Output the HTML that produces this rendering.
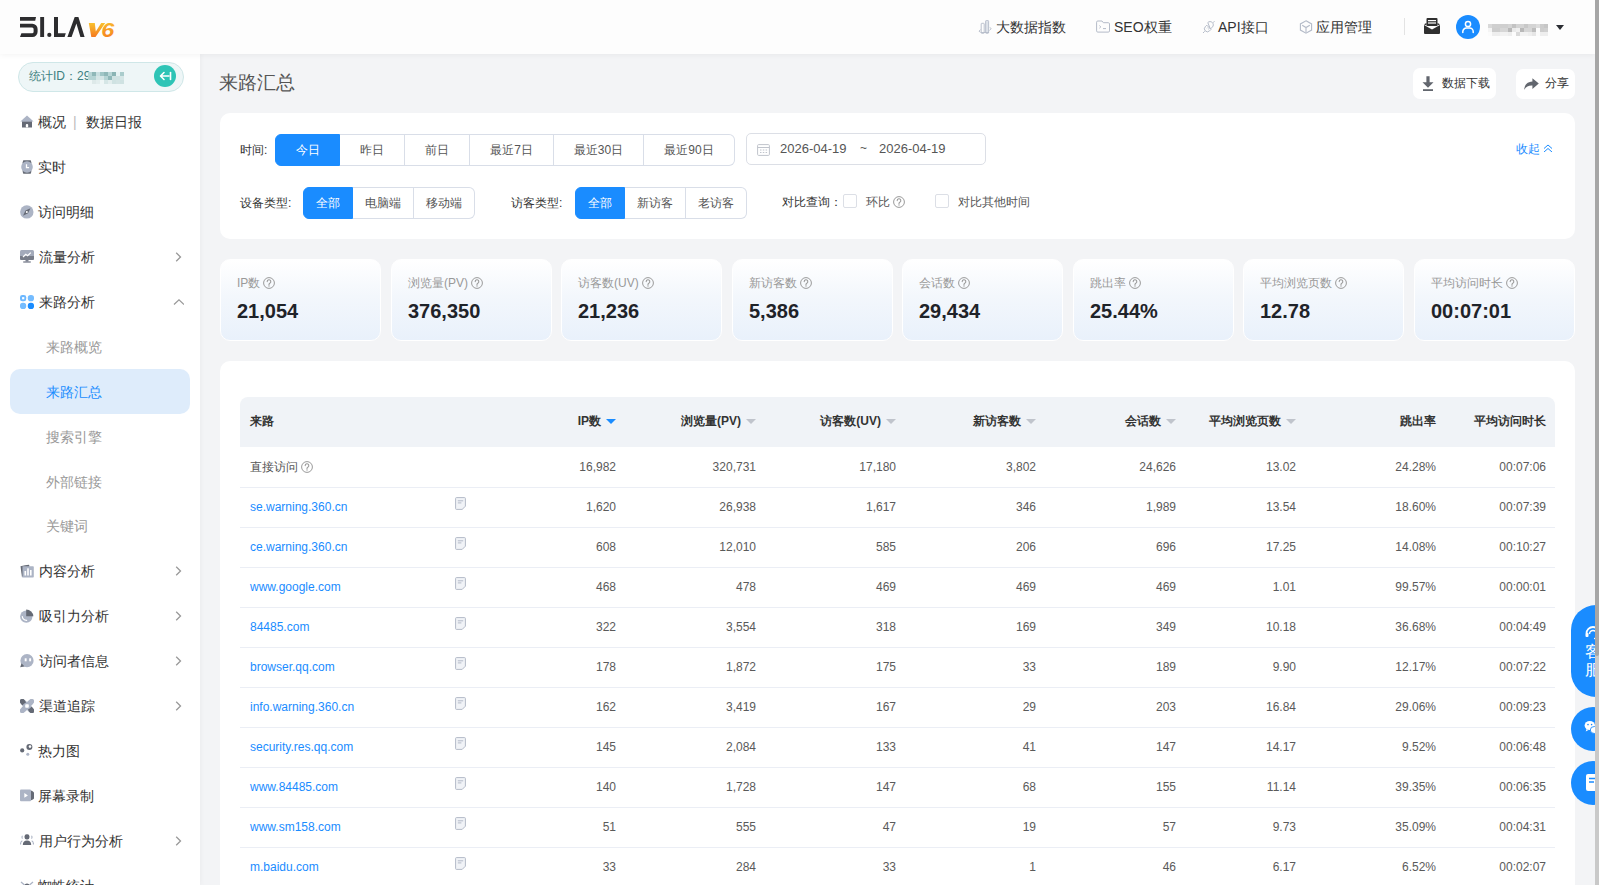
<!DOCTYPE html>
<html><head><meta charset="utf-8">
<style>
*{box-sizing:border-box;margin:0;padding:0}
html,body{width:1599px;height:885px;overflow:hidden}
body{font-family:"Liberation Sans",sans-serif;background:#f3f4f6;position:relative;color:#333}
.abs{position:absolute}
#hdr{left:0;top:0;width:1595px;height:54px;background:#fdfdfd;box-shadow:0 1px 6px rgba(0,0,0,0.05);z-index:3}
#side{left:0;top:54px;width:200px;height:831px;background:#fff;z-index:2;box-shadow:1px 0 5px rgba(0,0,0,0.04)}
#scroll{left:1595px;top:0;width:4px;height:885px;background:#c9c9c9;z-index:10}
#thumb{left:1595px;top:0;width:4px;height:656px;background:#a6a6a6;z-index:11;border-radius:0 0 2px 2px}
.nav{font-size:14px;color:#333;top:19px;line-height:16px;white-space:nowrap}
.mi{left:0;width:200px;height:45px;font-size:14px;color:#333;white-space:nowrap}
.mi .t{position:absolute;left:38px;top:15px;line-height:16px}
.mi .ic{position:absolute;left:20px;top:16px;width:14px;height:14px}
.mi .chev{position:absolute;left:174px;top:18px;width:8px;height:8px}
.sub{left:0;width:200px;height:45px;font-size:14px;color:#999;white-space:nowrap}
.sub .t{position:absolute;left:46px;top:15px;line-height:16px}
.card{background:#fff;border-radius:10px}
.btn{font-size:12px;color:#555;white-space:nowrap}
.grp{display:flex;height:32px}
.grp div{height:32px;line-height:30px;text-align:center;font-size:12px;color:#555;border:1px solid #d9dee8;border-left:none;background:#fff}
.grp div:first-child{border-left:1px solid #d9dee8;border-radius:6px 0 0 6px}
.grp div:last-child{border-radius:0 6px 6px 0}
.grp div.on{background:#1a8cff;color:#fff;border-color:#1a8cff}
.lbl{font-size:12px;color:#333;white-space:nowrap;line-height:14px}
.stat{top:259px;width:161px;height:82px;border-radius:10px;background:linear-gradient(180deg,#ffffff 0%,#f3f7fc 45%,#e9f1fb 100%);border:1px solid #fff}
.stat .k{position:absolute;left:16px;top:16px;font-size:12px;color:#999;line-height:14px;white-space:nowrap}
.stat .v{position:absolute;left:16px;top:39px;font-size:20px;font-weight:bold;color:#1f2329;line-height:24px;white-space:nowrap}
.q{display:inline-block;width:12px;height:12px;border:1px solid #999;border-radius:50%;font-size:9px;line-height:10px;text-align:center;color:#888;vertical-align:-2px;margin-left:3px;position:relative}
.qs{display:inline-block;vertical-align:-2px;margin-left:3px}
.q::after{content:"?";position:absolute;left:0;top:0;width:10px;height:10px;line-height:10px;font-size:9px;text-align:center}
#tbl{left:240px;top:397px;width:1315px}
.th{position:absolute;top:0;height:50px;line-height:48px;font-size:12px;font-weight:bold;color:#333;white-space:nowrap}
.row{position:absolute;left:0;width:1315px;height:40px;border-bottom:1px solid #ebeef5}
.c{position:absolute;top:0;line-height:41px;font-size:12px;color:#5a5a5a;white-space:nowrap;text-align:right}
.car{display:inline-block;width:0;height:0;border-left:5px solid transparent;border-right:5px solid transparent;border-top:5px solid #c0c4cc;vertical-align:1px;margin-left:5px}
.lnk{color:#1a8cff}
</style></head>
<body>
<div id="hdr" class="abs">
  <!-- logo -->
  <svg class="abs" style="left:20px;top:17px" width="96" height="21" viewBox="0 0 96 21">
    <g fill="#2d2d2f">
      <path d="M0 0H16L15.2 3.8H0z"/>
      <path d="M0 6.7H12.3A5.3 5.3 0 0 1 17.6 12V14.8A5.2 5.2 0 0 1 12.4 20H0L1.4 16.2H12.1A1.5 1.5 0 0 0 13.6 14.7V12.1A1.5 1.5 0 0 0 12.1 10.6H0z"/>
      <rect x="20.2" y="0" width="3.9" height="20"/>
      <circle cx="29.3" cy="17.9" r="2.1"/>
      <path d="M34 0H38V16.2H45.8L44.6 20H34z"/>
      <path d="M47.4 20L54.7 0H58.4L64.6 20H60.4L56.4 6.6 51.6 20z"/>
    </g>
    <defs><linearGradient id="og" x1="0" y1="0" x2="0" y2="1"><stop offset="0" stop-color="#f9c22e"/><stop offset="1" stop-color="#f5791f"/></linearGradient></defs>
    <path d="M68.8 6H74.8L75.8 14.5 81.2 6H85.2L75.5 20H71.3z" fill="url(#og)"/><text x="81.3" y="20" font-family="Liberation Sans" font-weight="bold" font-style="italic" font-size="19.5" fill="url(#og)" textLength="13" lengthAdjust="spacingAndGlyphs">6</text>
  </svg>
  <svg class="abs" style="left:978px;top:20px" width="14" height="14" viewBox="0 0 14 14"><rect x="3.2" y="3.3" width="3" height="10" rx="0.6" fill="none" stroke="#b4bbc8" stroke-width="0.9"/><rect x="7.6" y="0.5" width="3" height="12.8" rx="0.8" fill="#dfe3ea" stroke="#b4bbc8" stroke-width="0.9"/><path d="M1 11.2L2.6 9.5M1 11.2l1.6 1.2M13.2 8.5L11.5 10.5M13.2 8.5l-1.5-1" stroke="#b4bbc8" stroke-width="0.9" fill="none"/><path d="M3 12.5h8" stroke="#b4bbc8" stroke-width="0.9"/></svg>
  <div class="abs nav" style="left:996px">大数据指数</div>
  <svg class="abs" style="left:1096px;top:20px" width="14" height="13" viewBox="0 0 14 13"><path d="M1.8 1h4.2l1.3 1.7h5a1.2 1.2 0 0 1 1.2 1.2v7a1.2 1.2 0 0 1-1.2 1.2H1.8A1.2 1.2 0 0 1 0.6 10.9V2.2A1.2 1.2 0 0 1 1.8 1z" fill="none" stroke="#b4bbc8" stroke-width="1"/><path d="M3.4 5.6l1.4 1.3-1.4 1.3M7 8.6h3" stroke="#b4bbc8" stroke-width="1" fill="none"/></svg>
  <div class="abs nav" style="left:1114px">SEO权重</div>
  <svg class="abs" style="left:1202px;top:20px" width="14" height="14" viewBox="0 0 14 14"><path d="M5.8 2.6a3 3 0 0 1 4.5 0 3 3 0 0 1 0 4.5L8.4 9z" fill="none" stroke="#b4bbc8" stroke-width="1" transform="rotate(0)"/><path d="M12.5 1.2l-1.6 1.6M1 13l1.7-1.7" stroke="#b4bbc8" stroke-width="1"/><path d="M4.8 5.2L3.3 6.7a3 3 0 0 0 0 4.2 3 3 0 0 0 4.2 0l1.5-1.5z" fill="none" stroke="#b4bbc8" stroke-width="1"/><path d="M5.8 7.5l-0.8 0.8M7 8.5l-0.8 0.8" stroke="#b4bbc8" stroke-width="0.9"/></svg>
  <div class="abs nav" style="left:1218px">API接口</div>
  <svg class="abs" style="left:1299px;top:20px" width="14" height="14" viewBox="0 0 14 14"><path d="M7 0.8l5.6 3.1v6.2L7 13.2 1.4 10.1V3.9z" fill="none" stroke="#b4bbc8" stroke-width="1.1"/><path d="M3.2 5.2L7 7.5l3.8-2.3M7 7.5v5" stroke="#b4bbc8" stroke-width="1.1" fill="none"/></svg>
  <div class="abs nav" style="left:1316px">应用管理</div>
  <div class="abs" style="left:1404px;top:18px;width:1px;height:17px;background:#e3e3e3"></div>
  <svg class="abs" style="left:1424px;top:18px" width="16" height="16" viewBox="0 0 16 16"><rect x="2.5" y="0" width="11" height="8" rx="1" fill="#2f2f2f"/><rect x="4" y="2" width="8" height="1.2" fill="#fff"/><rect x="4" y="4.4" width="8" height="1.2" fill="#fff"/><path d="M0 7L8 11.5 16 7V15a1 1 0 0 1-1 1H1a1 1 0 0 1-1-1z" fill="#2f2f2f"/><path d="M0 6.2L2.5 5v2.5zM16 6.2L13.5 5v2.5z" fill="#2f2f2f"/></svg>
  <div class="abs" style="left:1456px;top:15px;width:24px;height:24px;border-radius:50%;background:#1a8cff"></div>
  <svg class="abs" style="left:1456px;top:15px" width="24" height="24" viewBox="0 0 24 24"><circle cx="12" cy="9" r="2.6" fill="none" stroke="#fff" stroke-width="1.5"/><path d="M6.8 17.5v-0.8a3.6 3.6 0 0 1 3.6-3.6h3.2a3.6 3.6 0 0 1 3.6 3.6v0.8" fill="none" stroke="#fff" stroke-width="1.5" stroke-linecap="round"/></svg>
  <div class="abs" style="left:1488px;top:24px;width:4px;height:4px;background:#d9d9d9"></div><div class="abs" style="left:1492px;top:24px;width:4px;height:4px;background:#cfcfcf"></div><div class="abs" style="left:1496px;top:24px;width:4px;height:4px;background:#cfcfcf"></div><div class="abs" style="left:1500px;top:24px;width:4px;height:4px;background:#cfcfcf"></div><div class="abs" style="left:1504px;top:24px;width:4px;height:4px;background:#cfcfcf"></div><div class="abs" style="left:1508px;top:24px;width:4px;height:4px;background:#d4d4d4"></div><div class="abs" style="left:1512px;top:24px;width:4px;height:4px;background:#c3c3c3"></div><div class="abs" style="left:1516px;top:24px;width:4px;height:4px;background:#d4d4d4"></div><div class="abs" style="left:1520px;top:24px;width:4px;height:4px;background:#d4d4d4"></div><div class="abs" style="left:1524px;top:24px;width:4px;height:4px;background:#c8c8c8"></div><div class="abs" style="left:1528px;top:24px;width:4px;height:4px;background:#d4d4d4"></div><div class="abs" style="left:1532px;top:24px;width:4px;height:4px;background:#d4d4d4"></div><div class="abs" style="left:1536px;top:24px;width:4px;height:4px;background:#dddddd"></div><div class="abs" style="left:1540px;top:24px;width:4px;height:4px;background:#cccccc"></div><div class="abs" style="left:1544px;top:24px;width:4px;height:4px;background:#c6c6c6"></div><div class="abs" style="left:1488px;top:28px;width:4px;height:4px;background:#f4f4f4"></div><div class="abs" style="left:1492px;top:28px;width:4px;height:4px;background:#cdcdcd"></div><div class="abs" style="left:1496px;top:28px;width:4px;height:4px;background:#cdcdcd"></div><div class="abs" style="left:1500px;top:28px;width:4px;height:4px;background:#d6d6d6"></div><div class="abs" style="left:1504px;top:28px;width:4px;height:4px;background:#d6d6d6"></div><div class="abs" style="left:1508px;top:28px;width:4px;height:4px;background:#b8b8b8"></div><div class="abs" style="left:1512px;top:28px;width:4px;height:4px;background:#eaeaea"></div><div class="abs" style="left:1516px;top:28px;width:4px;height:4px;background:#f0f0f0"></div><div class="abs" style="left:1520px;top:28px;width:4px;height:4px;background:#b8b8b8"></div><div class="abs" style="left:1524px;top:28px;width:4px;height:4px;background:#d6d6d6"></div><div class="abs" style="left:1528px;top:28px;width:4px;height:4px;background:#d6d6d6"></div><div class="abs" style="left:1532px;top:28px;width:4px;height:4px;background:#bdbdbd"></div><div class="abs" style="left:1536px;top:28px;width:4px;height:4px;background:#fbfbfb"></div><div class="abs" style="left:1540px;top:28px;width:4px;height:4px;background:#cdcdcd"></div><div class="abs" style="left:1544px;top:28px;width:4px;height:4px;background:#d0d0d0"></div><div class="abs" style="left:1488px;top:32px;width:4px;height:4px;background:#fbfbfb"></div><div class="abs" style="left:1492px;top:32px;width:4px;height:4px;background:#eeeeee"></div><div class="abs" style="left:1496px;top:32px;width:4px;height:4px;background:#eeeeee"></div><div class="abs" style="left:1500px;top:32px;width:4px;height:4px;background:#f2f2f2"></div><div class="abs" style="left:1504px;top:32px;width:4px;height:4px;background:#f2f2f2"></div><div class="abs" style="left:1508px;top:32px;width:4px;height:4px;background:#eeeeee"></div><div class="abs" style="left:1512px;top:32px;width:4px;height:4px;background:#fcfcfc"></div><div class="abs" style="left:1516px;top:32px;width:4px;height:4px;background:#dadada"></div><div class="abs" style="left:1520px;top:32px;width:4px;height:4px;background:#f2f2f2"></div><div class="abs" style="left:1524px;top:32px;width:4px;height:4px;background:#f2f2f2"></div><div class="abs" style="left:1528px;top:32px;width:4px;height:4px;background:#eeeeee"></div><div class="abs" style="left:1532px;top:32px;width:4px;height:4px;background:#e6e6e6"></div><div class="abs" style="left:1536px;top:32px;width:4px;height:4px;background:#fbfbfb"></div><div class="abs" style="left:1540px;top:32px;width:4px;height:4px;background:#eeeeee"></div><div class="abs" style="left:1544px;top:32px;width:4px;height:4px;background:#eeeeee"></div>
  <svg class="abs" style="left:1556px;top:25px" width="8" height="5" viewBox="0 0 8 5"><path d="M0 0H8L4 5z" fill="#2b2d33"/></svg>
</div>
<div id="side" class="abs">
  <div class="abs" style="left:18px;top:8px;width:166px;height:30px;border-radius:15px;background:#eef6f7;border:1px solid #cfe7e8"></div>
  <div class="abs" style="left:29px;top:15px;font-size:12px;color:#3d7f80;line-height:14px;white-space:nowrap">统计ID：29</div>
  <div class="abs" style="left:88px;top:18px;width:4px;height:4px;background:#b8d6d6"></div><div class="abs" style="left:92px;top:18px;width:4px;height:4px;background:#8fb8b8"></div><div class="abs" style="left:96px;top:18px;width:4px;height:4px;background:#c8dfe0"></div><div class="abs" style="left:100px;top:18px;width:4px;height:4px;background:#a0c6c6"></div><div class="abs" style="left:104px;top:18px;width:4px;height:4px;background:#8fb8b8"></div><div class="abs" style="left:108px;top:18px;width:4px;height:4px;background:#b8d6d6"></div><div class="abs" style="left:112px;top:18px;width:4px;height:4px;background:#8ab4b4"></div><div class="abs" style="left:116px;top:18px;width:4px;height:4px;background:#e6f2f2"></div><div class="abs" style="left:120px;top:18px;width:4px;height:4px;background:#aacccc"></div><div class="abs" style="left:88px;top:22px;width:4px;height:4px;background:#b5d4d4"></div><div class="abs" style="left:92px;top:22px;width:4px;height:4px;background:#b5d4d4"></div><div class="abs" style="left:96px;top:22px;width:4px;height:4px;background:#d5e6e6"></div><div class="abs" style="left:100px;top:22px;width:4px;height:4px;background:#d5e6e6"></div><div class="abs" style="left:104px;top:22px;width:4px;height:4px;background:#b5d4d4"></div><div class="abs" style="left:108px;top:22px;width:4px;height:4px;background:#8fb8b8"></div><div class="abs" style="left:112px;top:22px;width:4px;height:4px;background:#cfe2e2"></div><div class="abs" style="left:116px;top:22px;width:4px;height:4px;background:#cfe2e2"></div><div class="abs" style="left:120px;top:22px;width:4px;height:4px;background:#d5e6e6"></div><div class="abs" style="left:88px;top:26px;width:4px;height:4px;background:#eef6f6"></div><div class="abs" style="left:92px;top:26px;width:4px;height:4px;background:#dde9e9"></div><div class="abs" style="left:96px;top:26px;width:4px;height:4px;background:#e3eeee"></div><div class="abs" style="left:100px;top:26px;width:4px;height:4px;background:#eef6f6"></div><div class="abs" style="left:104px;top:26px;width:4px;height:4px;background:#d5e6e6"></div><div class="abs" style="left:108px;top:26px;width:4px;height:4px;background:#e3eeee"></div><div class="abs" style="left:112px;top:26px;width:4px;height:4px;background:#cfe2e2"></div><div class="abs" style="left:116px;top:26px;width:4px;height:4px;background:#d3e4e4"></div><div class="abs" style="left:120px;top:26px;width:4px;height:4px;background:#cfe2e2"></div>
  <div class="abs" style="left:154px;top:11px;width:22px;height:22px;border-radius:50%;background:#2ec4b6"></div>
  <svg class="abs" style="left:154px;top:11px" width="22" height="22" viewBox="0 0 22 22"><path d="M15 11H7M10 7.5L6.5 11 10 14.5" stroke="#fff" stroke-width="1.6" fill="none" stroke-linecap="round" stroke-linejoin="round"/><path d="M16.5 7.5v7" stroke="#fff" stroke-width="1.6" stroke-linecap="round"/></svg>
<div class="mi abs" style="top:45px"><svg class="ic" viewBox="0 0 14 14"><path d="M2 6.2h10v6.3H2z" fill="#656a75"/><path d="M7 0.6L0.4 6.6h13.2z" fill="#acb4c5"/><rect x="5.8" y="9" width="2.4" height="3.5" rx="1" fill="#fff"/></svg><span class="t">概况<span style="color:#bbb;margin:0 9px 0 7px">|</span>数据日报</span></div>
<div class="mi abs" style="top:90px"><svg class="ic" viewBox="0 0 14 14"><path d="M3.3 0.2h7.4l0.6 2v9.6l-0.6 2H3.3l-0.6-2V2.2z" fill="#656a75"/><circle cx="7" cy="7" r="5.8" fill="#acb4c5"/><path d="M6.5 4.2v3.5h2.6" stroke="#fff" stroke-width="1.3" fill="none"/></svg><span class="t">实时</span></div>
<div class="mi abs" style="top:135px"><svg class="ic" viewBox="0 0 14 14"><circle cx="6.8" cy="6.9" r="6.7" fill="#acb4c5"/><path d="M10.5 3.2L8 8.3 3 10.7 5.5 5.6z" fill="#656a75"/><circle cx="6.8" cy="6.9" r="1" fill="#fff"/></svg><span class="t">访问明细</span></div>
<div class="mi abs" style="top:180px"><svg class="ic" viewBox="0 0 14 14"><rect x="0" y="0" width="14" height="10" rx="1.5" fill="#a3aaba"/><path d="M0 6h14v2.5a1.5 1.5 0 0 1-1.5 1.5h-11A1.5 1.5 0 0 1 0 8.5z" fill="#787d89"/><rect x="5.5" y="10" width="3" height="1.8" fill="#7d8290"/><rect x="3" y="11.2" width="8" height="1.6" rx="0.8" fill="#8a8f9c"/><path d="M3 7L5.8 4.3l1.8 1.4L10.8 2.6" stroke="#fff" stroke-width="1.3" fill="none"/></svg><span class="t" style="left:39px">流量分析</span><svg class="chev" viewBox="0 0 8 10" style="left:174px;top:18px;width:8px;height:10px"><path d="M2.2 0.8L6.5 5 2.2 9.2" stroke="#999" stroke-width="1.3" fill="none"/></svg></div>
<div class="mi abs" style="top:225px"><svg class="ic" viewBox="0 0 14 14"><rect x="0" y="0" width="6.2" height="6.2" rx="2.3" fill="#6cb8ff"/><rect x="2.1" y="2.1" width="2.2" height="2.2" fill="#fff"/><rect x="7.8" y="0" width="6.2" height="6.2" rx="2.8" fill="#74bcff"/><rect x="0" y="7.8" width="6.2" height="6.2" rx="2.8" fill="#74bcff"/><rect x="7.8" y="7.8" width="6.2" height="6.2" rx="2.8" fill="#1a8cff"/></svg><span class="t" style="left:39px">来路分析</span><svg class="chev" viewBox="0 0 10 6" style="left:173px;top:20px;width:11px;height:6px"><path d="M0.5 5.5L5.5 0.8 10.5 5.5" stroke="#999" stroke-width="1.2" fill="none"/></svg></div>
<div class="sub abs" style="top:270px"><span class="t">来路概览</span></div>
<div class="abs" style="left:10px;top:315px;width:180px;height:45px;border-radius:10px;background:#deecfb"></div>
<div class="sub abs" style="top:315px"><span class="t" style="color:#1a8cff">来路汇总</span></div>
<div class="sub abs" style="top:360px"><span class="t">搜索引擎</span></div>
<div class="sub abs" style="top:405px"><span class="t">外部链接</span></div>
<div class="sub abs" style="top:449px"><span class="t">关键词</span></div>
<div class="mi abs" style="top:494px"><svg class="ic" viewBox="0 0 14 14"><path d="M0.5 2.2L5 1.3 9 0.8 9.5 2.3 2 13.5z" fill="#656a75"/><path d="M2.5 2.3h10.5a0.8 0.8 0 0 1 0.8 0.8v9.6a0.8 0.8 0 0 1-0.8 0.8H2.5z" fill="#acb4c5"/><rect x="4.5" y="7" width="1.6" height="4.5" fill="#fff"/><rect x="7.2" y="4.3" width="1.6" height="7.2" fill="#fff"/><rect x="10" y="6" width="1.6" height="5.5" fill="#fff"/></svg><span class="t" style="left:39px">内容分析</span><svg class="chev" viewBox="0 0 8 10" style="left:174px;top:18px;width:8px;height:10px"><path d="M2.2 0.8L6.5 5 2.2 9.2" stroke="#999" stroke-width="1.3" fill="none"/></svg></div>
<div class="mi abs" style="top:539px"><svg class="ic" viewBox="0 0 14 14"><circle cx="6.3" cy="7.6" r="6.2" fill="#acb4c5"/><path d="M6.2 0.5A7.2 7.2 0 0 1 13.4 7.2H6.2z" fill="#656a75"/><path d="M2.3 7.5Q2.6 10.8 6.6 11.4" stroke="#fff" stroke-width="1.2" fill="none" stroke-linecap="round"/></svg><span class="t" style="left:39px">吸引力分析</span><svg class="chev" viewBox="0 0 8 10" style="left:174px;top:18px;width:8px;height:10px"><path d="M2.2 0.8L6.5 5 2.2 9.2" stroke="#999" stroke-width="1.3" fill="none"/></svg></div>
<div class="mi abs" style="top:584px"><svg class="ic" viewBox="0 0 14 14"><circle cx="7" cy="6.7" r="6.6" fill="#acb4c5"/><path d="M0.2 13.2L1.5 9.2 4.5 12.6z" fill="#656a75"/><rect x="4.7" y="4.3" width="1.9" height="3" fill="#fff"/><rect x="9.2" y="4.3" width="1.9" height="3" fill="#fff"/></svg><span class="t" style="left:39px">访问者信息</span><svg class="chev" viewBox="0 0 8 10" style="left:174px;top:18px;width:8px;height:10px"><path d="M2.2 0.8L6.5 5 2.2 9.2" stroke="#999" stroke-width="1.3" fill="none"/></svg></div>
<div class="mi abs" style="top:629px"><svg class="ic" viewBox="0 0 14 14"><path d="M0 1.5Q0 0 1.5 0h2Q5.5 1.5 7 3 8.5 1.5 10.5 0h2Q14 0 14 1.5v2Q12.5 5.5 11 7 12.5 8.5 14 10.5v2Q14 14 12.5 14h-2Q8.5 12.5 7 11 5.5 12.5 3.5 14h-2Q0 14 0 12.5v-2Q1.5 8.5 3 7 1.5 5.5 0 3.5z" fill="#acb4c5"/><path d="M0 1.5Q0 0 1.5 0h2Q5.5 1.5 6 3.5 3.5 4.5 2.5 6.5 1 5 0 3.5z" fill="#656a75"/><path d="M14 12.5Q14 14 12.5 14h-2Q8.5 12.5 8 10.5 10.5 9.5 11.5 7.5 13 9 14 10.5z" fill="#656a75"/><rect x="5.2" y="5.2" width="3.6" height="3.6" rx="0.8" fill="#fff"/></svg><span class="t" style="left:39px">渠道追踪</span><svg class="chev" viewBox="0 0 8 10" style="left:174px;top:18px;width:8px;height:10px"><path d="M2.2 0.8L6.5 5 2.2 9.2" stroke="#999" stroke-width="1.3" fill="none"/></svg></div>
<div class="mi abs" style="top:674px"><svg class="ic" viewBox="0 0 14 14"><circle cx="2.2" cy="6.4" r="2.1" fill="#656a75"/><circle cx="9.4" cy="3" r="3" fill="#656a75"/><circle cx="10" cy="2.6" r="1.3" fill="#fff"/><circle cx="7.8" cy="10.2" r="1.5" fill="#acb4c5"/></svg><span class="t">热力图</span></div>
<div class="mi abs" style="top:719px"><svg class="ic" viewBox="0 0 14 14"><path d="M10 1.5a5 5 0 0 1 0 10z" fill="#656a75"/><rect x="0" y="0.5" width="11" height="11.8" rx="1" fill="#acb4c5"/><path d="M4.3 4l3.6 2.4-3.6 2.4z" fill="#fff"/></svg><span class="t">屏幕录制</span></div>
<div class="mi abs" style="top:764px"><svg class="ic" viewBox="0 0 14 14"><rect x="4.6" y="0.2" width="4.8" height="5.2" rx="2" fill="#656a75"/><path d="M2.8 11Q2.8 6.5 7 6.5 11.2 6.5 11.2 11z" fill="#656a75"/><path d="M2.5 1.8Q1.5 3.2 2.5 4.6M11.5 1.8Q12.5 3.2 11.5 4.6M0.5 10.5Q0.5 7.5 2.3 6.8M13.5 10.5Q13.5 7.5 11.7 6.8" stroke="#acb4c5" stroke-width="1.1" fill="none"/></svg><span class="t" style="left:39px">用户行为分析</span><svg class="chev" viewBox="0 0 8 10" style="left:174px;top:18px;width:8px;height:10px"><path d="M2.2 0.8L6.5 5 2.2 9.2" stroke="#999" stroke-width="1.3" fill="none"/></svg></div>
<div class="mi abs" style="top:809px"><svg class="ic" viewBox="0 0 14 14"><ellipse cx="7" cy="8" rx="3" ry="3.5" fill="#656a75"/><path d="M1 3l3.5 3M13 3L9.5 6M0.5 9h3.5M13.5 9H10" stroke="#acb4c5" stroke-width="1.3"/></svg><span class="t">蜘蛛统计</span></div>
</div>
<div id="main">
<div class="abs" style="left:219px;top:73px;font-size:18.5px;color:#555;line-height:20px;white-space:nowrap">来路汇总</div>
<div class="abs" style="left:1413px;top:68px;width:83px;height:31px;border-radius:7px;background:#fff"></div>
<svg class="abs" style="left:1422px;top:76px" width="12" height="15" viewBox="0 0 12 15"><path d="M4.4 0.3h3.2v6H11.5L6 11.8 0.5 6.3h3.9z" fill="#62666e"/><rect x="1" y="13.2" width="10" height="1.8" fill="#62666e"/></svg>
<div class="abs btn" style="left:1442px;top:76px;line-height:14px;color:#333">数据下载</div>
<div class="abs" style="left:1516px;top:69px;width:59px;height:30px;border-radius:7px;background:#fff"></div>
<svg class="abs" style="left:1524px;top:78px" width="15" height="12" viewBox="0 0 15 12"><path d="M0.2 11.8C0.6 6.6 3.6 3.8 8.4 3.6V0.2L14.8 5.6 8.4 11V7.6C4.6 7.4 2.2 8.8 0.2 11.8z" fill="#62666e"/></svg>
<div class="abs btn" style="left:1545px;top:76px;line-height:14px;color:#333">分享</div>

<div class="abs card" style="left:220px;top:113px;width:1355px;height:126px"></div>
<div class="abs lbl" style="left:240px;top:143px">时间:</div>
<div class="abs grp" style="left:275px;top:134px;width:461px">
  <div class="on" style="width:65px">今日</div><div style="width:65px">昨日</div><div style="width:65px">前日</div><div style="width:84px">最近7日</div><div style="width:90px">最近30日</div><div style="width:91px">最近90日</div>
</div>
<div class="abs" style="left:746px;top:133px;width:240px;height:32px;border:1px solid #dcdfe6;border-radius:5px;background:#fff"></div>
<svg class="abs" style="left:757px;top:143px" width="13" height="13" viewBox="0 0 13 13"><rect x="0.6" y="1.6" width="11.8" height="10.8" rx="1" fill="none" stroke="#c0c4cc" stroke-width="1"/><path d="M0.6 4.5h11.8M3 7h1.5M5.8 7h1.5M8.6 7h1.5M3 9.5h1.5M5.8 9.5h1.5M8.6 9.5h1.5" stroke="#c0c4cc" stroke-width="1"/></svg>
<div class="abs lbl" style="left:780px;top:142px;color:#555;font-size:13px">2026-04-19</div>
<div class="abs lbl" style="left:860px;top:141px;color:#555">~</div>
<div class="abs lbl" style="left:879px;top:142px;color:#555;font-size:13px">2026-04-19</div>
<div class="abs lbl" style="left:1516px;top:142px;color:#1a8cff">收起</div>
<svg class="abs" style="left:1543px;top:144px" width="10" height="8" viewBox="0 0 10 8"><path d="M1 4.5L5 1 9 4.5M1 8L5 4.5 9 8" stroke="#1a8cff" stroke-width="1" fill="none"/></svg>

<div class="abs lbl" style="left:240px;top:196px">设备类型:</div>
<div class="abs grp" style="left:303px;top:187px;width:172px">
  <div class="on" style="width:50px">全部</div><div style="width:61px">电脑端</div><div style="width:61px">移动端</div>
</div>
<div class="abs lbl" style="left:511px;top:196px">访客类型:</div>
<div class="abs grp" style="left:575px;top:187px;width:172px">
  <div class="on" style="width:50px">全部</div><div style="width:61px">新访客</div><div style="width:61px">老访客</div>
</div>
<div class="abs lbl" style="left:782px;top:195px">对比查询：</div>
<div class="abs" style="left:843px;top:194px;width:14px;height:14px;border:1px solid #dcdfe6;border-radius:2px;background:#fff"></div>
<div class="abs lbl" style="left:866px;top:195px;color:#555">环比</div>
<svg class="abs" style="left:893px;top:196px" width="12" height="12" viewBox="0 0 12 12"><circle cx="6" cy="6" r="5.4" fill="none" stroke="#9a9a9a" stroke-width="1"/><path d="M4.2 4.6a1.8 1.8 0 1 1 2.6 1.6c-0.6 0.3-0.8 0.6-0.8 1.3v0.4" fill="none" stroke="#9a9a9a" stroke-width="1.1" stroke-linecap="round"/><circle cx="6" cy="9.1" r="0.65" fill="#9a9a9a"/></svg>
<div class="abs" style="left:935px;top:194px;width:14px;height:14px;border:1px solid #dcdfe6;border-radius:2px;background:#fff"></div>
<div class="abs lbl" style="left:958px;top:195px;color:#555">对比其他时间</div>
<div class="abs stat" style="left:220px"><div class="k">IP数<svg class="qs" width="12" height="12" viewBox="0 0 12 12"><circle cx="6" cy="6" r="5.4" fill="none" stroke="#9a9a9a" stroke-width="1"/><path d="M4.2 4.6a1.8 1.8 0 1 1 2.6 1.6c-0.6 0.3-0.8 0.6-0.8 1.3v0.4" fill="none" stroke="#9a9a9a" stroke-width="1.1" stroke-linecap="round"/><circle cx="6" cy="9.1" r="0.65" fill="#9a9a9a"/></svg></div><div class="v">21,054</div></div>
<div class="abs stat" style="left:391px"><div class="k">浏览量(PV)<svg class="qs" width="12" height="12" viewBox="0 0 12 12"><circle cx="6" cy="6" r="5.4" fill="none" stroke="#9a9a9a" stroke-width="1"/><path d="M4.2 4.6a1.8 1.8 0 1 1 2.6 1.6c-0.6 0.3-0.8 0.6-0.8 1.3v0.4" fill="none" stroke="#9a9a9a" stroke-width="1.1" stroke-linecap="round"/><circle cx="6" cy="9.1" r="0.65" fill="#9a9a9a"/></svg></div><div class="v">376,350</div></div>
<div class="abs stat" style="left:561px"><div class="k">访客数(UV)<svg class="qs" width="12" height="12" viewBox="0 0 12 12"><circle cx="6" cy="6" r="5.4" fill="none" stroke="#9a9a9a" stroke-width="1"/><path d="M4.2 4.6a1.8 1.8 0 1 1 2.6 1.6c-0.6 0.3-0.8 0.6-0.8 1.3v0.4" fill="none" stroke="#9a9a9a" stroke-width="1.1" stroke-linecap="round"/><circle cx="6" cy="9.1" r="0.65" fill="#9a9a9a"/></svg></div><div class="v">21,236</div></div>
<div class="abs stat" style="left:732px"><div class="k">新访客数<svg class="qs" width="12" height="12" viewBox="0 0 12 12"><circle cx="6" cy="6" r="5.4" fill="none" stroke="#9a9a9a" stroke-width="1"/><path d="M4.2 4.6a1.8 1.8 0 1 1 2.6 1.6c-0.6 0.3-0.8 0.6-0.8 1.3v0.4" fill="none" stroke="#9a9a9a" stroke-width="1.1" stroke-linecap="round"/><circle cx="6" cy="9.1" r="0.65" fill="#9a9a9a"/></svg></div><div class="v">5,386</div></div>
<div class="abs stat" style="left:902px"><div class="k">会话数<svg class="qs" width="12" height="12" viewBox="0 0 12 12"><circle cx="6" cy="6" r="5.4" fill="none" stroke="#9a9a9a" stroke-width="1"/><path d="M4.2 4.6a1.8 1.8 0 1 1 2.6 1.6c-0.6 0.3-0.8 0.6-0.8 1.3v0.4" fill="none" stroke="#9a9a9a" stroke-width="1.1" stroke-linecap="round"/><circle cx="6" cy="9.1" r="0.65" fill="#9a9a9a"/></svg></div><div class="v">29,434</div></div>
<div class="abs stat" style="left:1073px"><div class="k">跳出率<svg class="qs" width="12" height="12" viewBox="0 0 12 12"><circle cx="6" cy="6" r="5.4" fill="none" stroke="#9a9a9a" stroke-width="1"/><path d="M4.2 4.6a1.8 1.8 0 1 1 2.6 1.6c-0.6 0.3-0.8 0.6-0.8 1.3v0.4" fill="none" stroke="#9a9a9a" stroke-width="1.1" stroke-linecap="round"/><circle cx="6" cy="9.1" r="0.65" fill="#9a9a9a"/></svg></div><div class="v">25.44%</div></div>
<div class="abs stat" style="left:1243px"><div class="k">平均浏览页数<svg class="qs" width="12" height="12" viewBox="0 0 12 12"><circle cx="6" cy="6" r="5.4" fill="none" stroke="#9a9a9a" stroke-width="1"/><path d="M4.2 4.6a1.8 1.8 0 1 1 2.6 1.6c-0.6 0.3-0.8 0.6-0.8 1.3v0.4" fill="none" stroke="#9a9a9a" stroke-width="1.1" stroke-linecap="round"/><circle cx="6" cy="9.1" r="0.65" fill="#9a9a9a"/></svg></div><div class="v">12.78</div></div>
<div class="abs stat" style="left:1414px"><div class="k">平均访问时长<svg class="qs" width="12" height="12" viewBox="0 0 12 12"><circle cx="6" cy="6" r="5.4" fill="none" stroke="#9a9a9a" stroke-width="1"/><path d="M4.2 4.6a1.8 1.8 0 1 1 2.6 1.6c-0.6 0.3-0.8 0.6-0.8 1.3v0.4" fill="none" stroke="#9a9a9a" stroke-width="1.1" stroke-linecap="round"/><circle cx="6" cy="9.1" r="0.65" fill="#9a9a9a"/></svg></div><div class="v">00:07:01</div></div>
<div class="abs card" style="left:220px;top:361px;width:1355px;height:600px"></div>
<div class="abs" style="left:240px;top:397px;width:1315px;height:50px;background:#f0f3f7;border-radius:8px 8px 0 0"></div>
<div class="abs th" style="left:250px;top:397px">来路</div>
<div class="abs th" style="right:983px;top:397px">IP数<span class="car" style="border-top-color:#1a8cff"></span></div>
<div class="abs th" style="right:843px;top:397px">浏览量(PV)<span class="car" style="border-top-color:#c0c4cc"></span></div>
<div class="abs th" style="right:703px;top:397px">访客数(UV)<span class="car" style="border-top-color:#c0c4cc"></span></div>
<div class="abs th" style="right:563px;top:397px">新访客数<span class="car" style="border-top-color:#c0c4cc"></span></div>
<div class="abs th" style="right:423px;top:397px">会话数<span class="car" style="border-top-color:#c0c4cc"></span></div>
<div class="abs th" style="right:303px;top:397px">平均浏览页数<span class="car" style="border-top-color:#c0c4cc"></span></div>
<div class="abs th" style="right:163px;top:397px">跳出率</div>
<div class="abs th" style="right:53px;top:397px">平均访问时长</div>
<div class="abs" style="left:240px;top:487px;width:1315px;height:1px;background:#ebeef5"></div>
<div class="abs c" style="left:250px;top:447px;text-align:left;color:#555">直接访问<svg class="qs" width="12" height="12" viewBox="0 0 12 12"><circle cx="6" cy="6" r="5.4" fill="none" stroke="#9a9a9a" stroke-width="1"/><path d="M4.2 4.6a1.8 1.8 0 1 1 2.6 1.6c-0.6 0.3-0.8 0.6-0.8 1.3v0.4" fill="none" stroke="#9a9a9a" stroke-width="1.1" stroke-linecap="round"/><circle cx="6" cy="9.1" r="0.65" fill="#9a9a9a"/></svg></div>
<div class="abs c" style="right:983px;top:447px">16,982</div>
<div class="abs c" style="right:843px;top:447px">320,731</div>
<div class="abs c" style="right:703px;top:447px">17,180</div>
<div class="abs c" style="right:563px;top:447px">3,802</div>
<div class="abs c" style="right:423px;top:447px">24,626</div>
<div class="abs c" style="right:303px;top:447px">13.02</div>
<div class="abs c" style="right:163px;top:447px">24.28%</div>
<div class="abs c" style="right:53px;top:447px">00:07:06</div>
<div class="abs" style="left:240px;top:527px;width:1315px;height:1px;background:#ebeef5"></div>
<div class="abs c lnk" style="left:250px;top:487px;text-align:left">se.warning.360.cn</div>
<svg class="abs" style="left:455px;top:497px" width="11" height="13" viewBox="0 0 11 13"><path d="M1.4 0.6h8.2a0.8 0.8 0 0 1 0.8 0.8v7.8L7.2 12.4H1.4a0.8 0.8 0 0 1-0.8-0.8V1.4a0.8 0.8 0 0 1 0.8-0.8z" fill="#f1f3f7" stroke="#b3bac8" stroke-width="1"/><path d="M2.8 3.8h5.4M2.8 5.9h3.6" stroke="#b3bac8" stroke-width="1"/></svg><div class="abs c" style="right:983px;top:487px">1,620</div>
<div class="abs c" style="right:843px;top:487px">26,938</div>
<div class="abs c" style="right:703px;top:487px">1,617</div>
<div class="abs c" style="right:563px;top:487px">346</div>
<div class="abs c" style="right:423px;top:487px">1,989</div>
<div class="abs c" style="right:303px;top:487px">13.54</div>
<div class="abs c" style="right:163px;top:487px">18.60%</div>
<div class="abs c" style="right:53px;top:487px">00:07:39</div>
<div class="abs" style="left:240px;top:567px;width:1315px;height:1px;background:#ebeef5"></div>
<div class="abs c lnk" style="left:250px;top:527px;text-align:left">ce.warning.360.cn</div>
<svg class="abs" style="left:455px;top:537px" width="11" height="13" viewBox="0 0 11 13"><path d="M1.4 0.6h8.2a0.8 0.8 0 0 1 0.8 0.8v7.8L7.2 12.4H1.4a0.8 0.8 0 0 1-0.8-0.8V1.4a0.8 0.8 0 0 1 0.8-0.8z" fill="#f1f3f7" stroke="#b3bac8" stroke-width="1"/><path d="M2.8 3.8h5.4M2.8 5.9h3.6" stroke="#b3bac8" stroke-width="1"/></svg><div class="abs c" style="right:983px;top:527px">608</div>
<div class="abs c" style="right:843px;top:527px">12,010</div>
<div class="abs c" style="right:703px;top:527px">585</div>
<div class="abs c" style="right:563px;top:527px">206</div>
<div class="abs c" style="right:423px;top:527px">696</div>
<div class="abs c" style="right:303px;top:527px">17.25</div>
<div class="abs c" style="right:163px;top:527px">14.08%</div>
<div class="abs c" style="right:53px;top:527px">00:10:27</div>
<div class="abs" style="left:240px;top:607px;width:1315px;height:1px;background:#ebeef5"></div>
<div class="abs c lnk" style="left:250px;top:567px;text-align:left">www.google.com</div>
<svg class="abs" style="left:455px;top:577px" width="11" height="13" viewBox="0 0 11 13"><path d="M1.4 0.6h8.2a0.8 0.8 0 0 1 0.8 0.8v7.8L7.2 12.4H1.4a0.8 0.8 0 0 1-0.8-0.8V1.4a0.8 0.8 0 0 1 0.8-0.8z" fill="#f1f3f7" stroke="#b3bac8" stroke-width="1"/><path d="M2.8 3.8h5.4M2.8 5.9h3.6" stroke="#b3bac8" stroke-width="1"/></svg><div class="abs c" style="right:983px;top:567px">468</div>
<div class="abs c" style="right:843px;top:567px">478</div>
<div class="abs c" style="right:703px;top:567px">469</div>
<div class="abs c" style="right:563px;top:567px">469</div>
<div class="abs c" style="right:423px;top:567px">469</div>
<div class="abs c" style="right:303px;top:567px">1.01</div>
<div class="abs c" style="right:163px;top:567px">99.57%</div>
<div class="abs c" style="right:53px;top:567px">00:00:01</div>
<div class="abs" style="left:240px;top:647px;width:1315px;height:1px;background:#ebeef5"></div>
<div class="abs c lnk" style="left:250px;top:607px;text-align:left">84485.com</div>
<svg class="abs" style="left:455px;top:617px" width="11" height="13" viewBox="0 0 11 13"><path d="M1.4 0.6h8.2a0.8 0.8 0 0 1 0.8 0.8v7.8L7.2 12.4H1.4a0.8 0.8 0 0 1-0.8-0.8V1.4a0.8 0.8 0 0 1 0.8-0.8z" fill="#f1f3f7" stroke="#b3bac8" stroke-width="1"/><path d="M2.8 3.8h5.4M2.8 5.9h3.6" stroke="#b3bac8" stroke-width="1"/></svg><div class="abs c" style="right:983px;top:607px">322</div>
<div class="abs c" style="right:843px;top:607px">3,554</div>
<div class="abs c" style="right:703px;top:607px">318</div>
<div class="abs c" style="right:563px;top:607px">169</div>
<div class="abs c" style="right:423px;top:607px">349</div>
<div class="abs c" style="right:303px;top:607px">10.18</div>
<div class="abs c" style="right:163px;top:607px">36.68%</div>
<div class="abs c" style="right:53px;top:607px">00:04:49</div>
<div class="abs" style="left:240px;top:687px;width:1315px;height:1px;background:#ebeef5"></div>
<div class="abs c lnk" style="left:250px;top:647px;text-align:left">browser.qq.com</div>
<svg class="abs" style="left:455px;top:657px" width="11" height="13" viewBox="0 0 11 13"><path d="M1.4 0.6h8.2a0.8 0.8 0 0 1 0.8 0.8v7.8L7.2 12.4H1.4a0.8 0.8 0 0 1-0.8-0.8V1.4a0.8 0.8 0 0 1 0.8-0.8z" fill="#f1f3f7" stroke="#b3bac8" stroke-width="1"/><path d="M2.8 3.8h5.4M2.8 5.9h3.6" stroke="#b3bac8" stroke-width="1"/></svg><div class="abs c" style="right:983px;top:647px">178</div>
<div class="abs c" style="right:843px;top:647px">1,872</div>
<div class="abs c" style="right:703px;top:647px">175</div>
<div class="abs c" style="right:563px;top:647px">33</div>
<div class="abs c" style="right:423px;top:647px">189</div>
<div class="abs c" style="right:303px;top:647px">9.90</div>
<div class="abs c" style="right:163px;top:647px">12.17%</div>
<div class="abs c" style="right:53px;top:647px">00:07:22</div>
<div class="abs" style="left:240px;top:727px;width:1315px;height:1px;background:#ebeef5"></div>
<div class="abs c lnk" style="left:250px;top:687px;text-align:left">info.warning.360.cn</div>
<svg class="abs" style="left:455px;top:697px" width="11" height="13" viewBox="0 0 11 13"><path d="M1.4 0.6h8.2a0.8 0.8 0 0 1 0.8 0.8v7.8L7.2 12.4H1.4a0.8 0.8 0 0 1-0.8-0.8V1.4a0.8 0.8 0 0 1 0.8-0.8z" fill="#f1f3f7" stroke="#b3bac8" stroke-width="1"/><path d="M2.8 3.8h5.4M2.8 5.9h3.6" stroke="#b3bac8" stroke-width="1"/></svg><div class="abs c" style="right:983px;top:687px">162</div>
<div class="abs c" style="right:843px;top:687px">3,419</div>
<div class="abs c" style="right:703px;top:687px">167</div>
<div class="abs c" style="right:563px;top:687px">29</div>
<div class="abs c" style="right:423px;top:687px">203</div>
<div class="abs c" style="right:303px;top:687px">16.84</div>
<div class="abs c" style="right:163px;top:687px">29.06%</div>
<div class="abs c" style="right:53px;top:687px">00:09:23</div>
<div class="abs" style="left:240px;top:767px;width:1315px;height:1px;background:#ebeef5"></div>
<div class="abs c lnk" style="left:250px;top:727px;text-align:left">security.res.qq.com</div>
<svg class="abs" style="left:455px;top:737px" width="11" height="13" viewBox="0 0 11 13"><path d="M1.4 0.6h8.2a0.8 0.8 0 0 1 0.8 0.8v7.8L7.2 12.4H1.4a0.8 0.8 0 0 1-0.8-0.8V1.4a0.8 0.8 0 0 1 0.8-0.8z" fill="#f1f3f7" stroke="#b3bac8" stroke-width="1"/><path d="M2.8 3.8h5.4M2.8 5.9h3.6" stroke="#b3bac8" stroke-width="1"/></svg><div class="abs c" style="right:983px;top:727px">145</div>
<div class="abs c" style="right:843px;top:727px">2,084</div>
<div class="abs c" style="right:703px;top:727px">133</div>
<div class="abs c" style="right:563px;top:727px">41</div>
<div class="abs c" style="right:423px;top:727px">147</div>
<div class="abs c" style="right:303px;top:727px">14.17</div>
<div class="abs c" style="right:163px;top:727px">9.52%</div>
<div class="abs c" style="right:53px;top:727px">00:06:48</div>
<div class="abs" style="left:240px;top:807px;width:1315px;height:1px;background:#ebeef5"></div>
<div class="abs c lnk" style="left:250px;top:767px;text-align:left">www.84485.com</div>
<svg class="abs" style="left:455px;top:777px" width="11" height="13" viewBox="0 0 11 13"><path d="M1.4 0.6h8.2a0.8 0.8 0 0 1 0.8 0.8v7.8L7.2 12.4H1.4a0.8 0.8 0 0 1-0.8-0.8V1.4a0.8 0.8 0 0 1 0.8-0.8z" fill="#f1f3f7" stroke="#b3bac8" stroke-width="1"/><path d="M2.8 3.8h5.4M2.8 5.9h3.6" stroke="#b3bac8" stroke-width="1"/></svg><div class="abs c" style="right:983px;top:767px">140</div>
<div class="abs c" style="right:843px;top:767px">1,728</div>
<div class="abs c" style="right:703px;top:767px">147</div>
<div class="abs c" style="right:563px;top:767px">68</div>
<div class="abs c" style="right:423px;top:767px">155</div>
<div class="abs c" style="right:303px;top:767px">11.14</div>
<div class="abs c" style="right:163px;top:767px">39.35%</div>
<div class="abs c" style="right:53px;top:767px">00:06:35</div>
<div class="abs" style="left:240px;top:847px;width:1315px;height:1px;background:#ebeef5"></div>
<div class="abs c lnk" style="left:250px;top:807px;text-align:left">www.sm158.com</div>
<svg class="abs" style="left:455px;top:817px" width="11" height="13" viewBox="0 0 11 13"><path d="M1.4 0.6h8.2a0.8 0.8 0 0 1 0.8 0.8v7.8L7.2 12.4H1.4a0.8 0.8 0 0 1-0.8-0.8V1.4a0.8 0.8 0 0 1 0.8-0.8z" fill="#f1f3f7" stroke="#b3bac8" stroke-width="1"/><path d="M2.8 3.8h5.4M2.8 5.9h3.6" stroke="#b3bac8" stroke-width="1"/></svg><div class="abs c" style="right:983px;top:807px">51</div>
<div class="abs c" style="right:843px;top:807px">555</div>
<div class="abs c" style="right:703px;top:807px">47</div>
<div class="abs c" style="right:563px;top:807px">19</div>
<div class="abs c" style="right:423px;top:807px">57</div>
<div class="abs c" style="right:303px;top:807px">9.73</div>
<div class="abs c" style="right:163px;top:807px">35.09%</div>
<div class="abs c" style="right:53px;top:807px">00:04:31</div>
<div class="abs" style="left:240px;top:887px;width:1315px;height:1px;background:#ebeef5"></div>
<div class="abs c lnk" style="left:250px;top:847px;text-align:left">m.baidu.com</div>
<svg class="abs" style="left:455px;top:857px" width="11" height="13" viewBox="0 0 11 13"><path d="M1.4 0.6h8.2a0.8 0.8 0 0 1 0.8 0.8v7.8L7.2 12.4H1.4a0.8 0.8 0 0 1-0.8-0.8V1.4a0.8 0.8 0 0 1 0.8-0.8z" fill="#f1f3f7" stroke="#b3bac8" stroke-width="1"/><path d="M2.8 3.8h5.4M2.8 5.9h3.6" stroke="#b3bac8" stroke-width="1"/></svg><div class="abs c" style="right:983px;top:847px">33</div>
<div class="abs c" style="right:843px;top:847px">284</div>
<div class="abs c" style="right:703px;top:847px">33</div>
<div class="abs c" style="right:563px;top:847px">1</div>
<div class="abs c" style="right:423px;top:847px">46</div>
<div class="abs c" style="right:303px;top:847px">6.17</div>
<div class="abs c" style="right:163px;top:847px">6.52%</div>
<div class="abs c" style="right:53px;top:847px">00:02:07</div>
<div class="abs" style="left:240px;top:927px;width:1315px;height:1px;background:#ebeef5"></div>
<div class="abs c lnk" style="left:250px;top:887px;text-align:left">www.so.com</div>
<svg class="abs" style="left:455px;top:897px" width="11" height="13" viewBox="0 0 11 13"><path d="M1.4 0.6h8.2a0.8 0.8 0 0 1 0.8 0.8v7.8L7.2 12.4H1.4a0.8 0.8 0 0 1-0.8-0.8V1.4a0.8 0.8 0 0 1 0.8-0.8z" fill="#f1f3f7" stroke="#b3bac8" stroke-width="1"/><path d="M2.8 3.8h5.4M2.8 5.9h3.6" stroke="#b3bac8" stroke-width="1"/></svg><div class="abs c" style="right:983px;top:887px">30</div>
<div class="abs c" style="right:843px;top:887px">120</div>
<div class="abs c" style="right:703px;top:887px">30</div>
<div class="abs c" style="right:563px;top:887px">10</div>
<div class="abs c" style="right:423px;top:887px">35</div>
<div class="abs c" style="right:303px;top:887px">4.00</div>
<div class="abs c" style="right:163px;top:887px">20.00%</div>
<div class="abs c" style="right:53px;top:887px">00:03:10</div>
<div class="abs" style="left:1571px;top:605px;width:50px;height:92px;border-radius:25px;background:#1a8cff;z-index:5"></div>
<svg class="abs" style="left:1585px;top:625px;z-index:6" width="16" height="15" viewBox="0 0 16 15"><path d="M1.5 8.5a6.5 6.5 0 0 1 13 0" stroke="#fff" stroke-width="1.8" fill="none"/><path d="M4.5 9a3.5 3.5 0 0 1 7 0" stroke="#fff" stroke-width="1.5" fill="none"/><rect x="0.5" y="8" width="3" height="4" rx="1" fill="#fff"/><path d="M12 13.5h-3" stroke="#fff" stroke-width="1.3"/></svg>
<div class="abs" style="left:1585px;top:643px;font-size:16px;color:#fff;line-height:18px;z-index:6;white-space:nowrap">客<br>服</div>
<div class="abs" style="left:1571px;top:707px;width:44px;height:44px;border-radius:22px;background:#1a8cff;z-index:5"></div>
<svg class="abs" style="left:1584px;top:720px;z-index:6" width="14" height="15" viewBox="0 0 14 15"><ellipse cx="5.8" cy="5.5" rx="5.2" ry="4.6" fill="#fff"/><path d="M2.5 9l-0.8 2.5 2.8-1.6z" fill="#fff"/><circle cx="4" cy="4.6" r="0.8" fill="#1a8cff"/><circle cx="7.6" cy="4.6" r="0.8" fill="#1a8cff"/><ellipse cx="10.3" cy="10" rx="4" ry="3.5" fill="#fff" stroke="#1a8cff" stroke-width="0.9"/></svg>
<div class="abs" style="left:1571px;top:761px;width:44px;height:44px;border-radius:22px;background:#1a8cff;z-index:5"></div>
<svg class="abs" style="left:1586px;top:774px;z-index:6" width="14" height="17" viewBox="0 0 14 17"><rect x="0" y="0" width="14" height="17" rx="2" fill="#fff"/><path d="M3 4.5h8M3 8h5" stroke="#1a8cff" stroke-width="1.5"/></svg>
</div>
<div id="scroll" class="abs"></div>
<div id="thumb" class="abs"></div>
</body></html>
